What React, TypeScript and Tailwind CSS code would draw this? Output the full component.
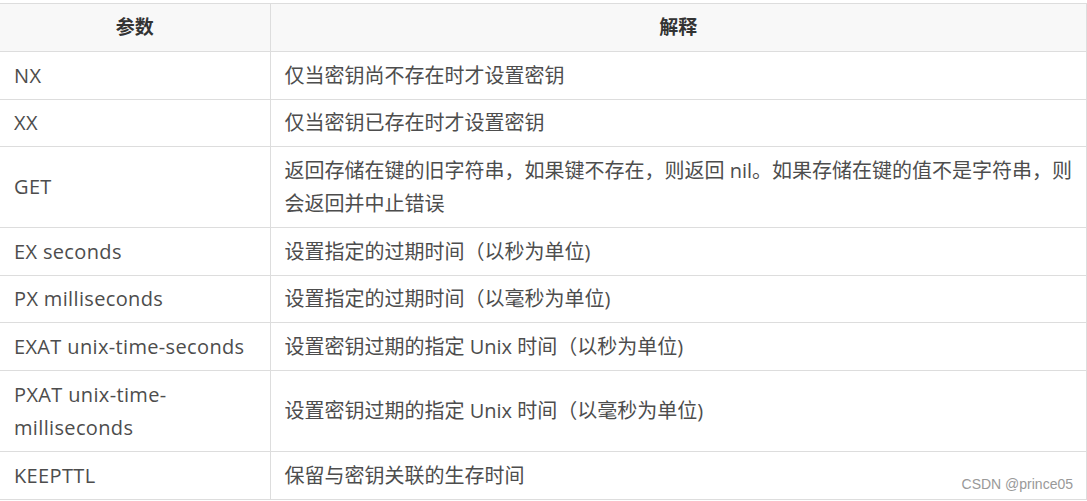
import React from "react";

const rows: [string, string][] = [
  ["NX", "仅当密钥尚不存在时才设置密钥"],
  ["XX", "仅当密钥已存在时才设置密钥"],
  ["GET", "返回存储在键的旧字符串，如果键不存在，则返回 nil。如果存储在键的值不是字符串，则会返回并中止错误"],
  ["EX seconds", "设置指定的过期时间（以秒为单位)"],
  ["PX milliseconds", "设置指定的过期时间（以毫秒为单位)"],
  ["EXAT unix-time-seconds", "设置密钥过期的指定 Unix 时间（以秒为单位)"],
  ["PXAT unix-time-milliseconds", "设置密钥过期的指定 Unix 时间（以毫秒为单位)"],
  ["KEEPTTL", "保留与密钥关联的生存时间"],
];

export default function App() {
  return (
    <div
      className="relative w-[1087px] h-[501px] bg-white overflow-hidden pt-[3px]"
      style={{ fontFamily: '"Open Sans", "Noto Sans CJK SC", sans-serif' }}
    >
      <table className="w-[1087px] border-collapse table-fixed text-[20px] text-[#4d4d4d]">
        <colgroup>
          <col className="w-[270px]" />
          <col />
        </colgroup>
        <thead>
          <tr className="bg-[#f8f8f8]">
            <th className="h-[48px] border-y border-r border-[#dddddd] font-bold text-[#333333] text-[19px] text-center">
              参数
            </th>
            <th className="h-[48px] border-y border-r border-[#dddddd] font-bold text-[#333333] text-[19px] text-center">
              解释
            </th>
          </tr>
        </thead>
        <tbody>
          {rows.map(([k, v]) => (
            <tr key={k}>
              <td className="border-b border-r border-[#dddddd] px-[14px] py-[6.6px] leading-[33.4px] tracking-[0.35px] align-middle">
                {k}
              </td>
              <td className="border-b border-r border-[#dddddd] pl-[14px] pr-[10px] py-[6.6px] leading-[33.4px] align-middle">
                {v}
              </td>
            </tr>
          ))}
        </tbody>
      </table>
      <div
        className="absolute right-[14px] bottom-[6px] text-[14px] text-[#999999]"
        style={{ fontFamily: '"Liberation Sans", Arial, sans-serif' }}
      >
        CSDN @prince05
      </div>
    </div>
  );
}
